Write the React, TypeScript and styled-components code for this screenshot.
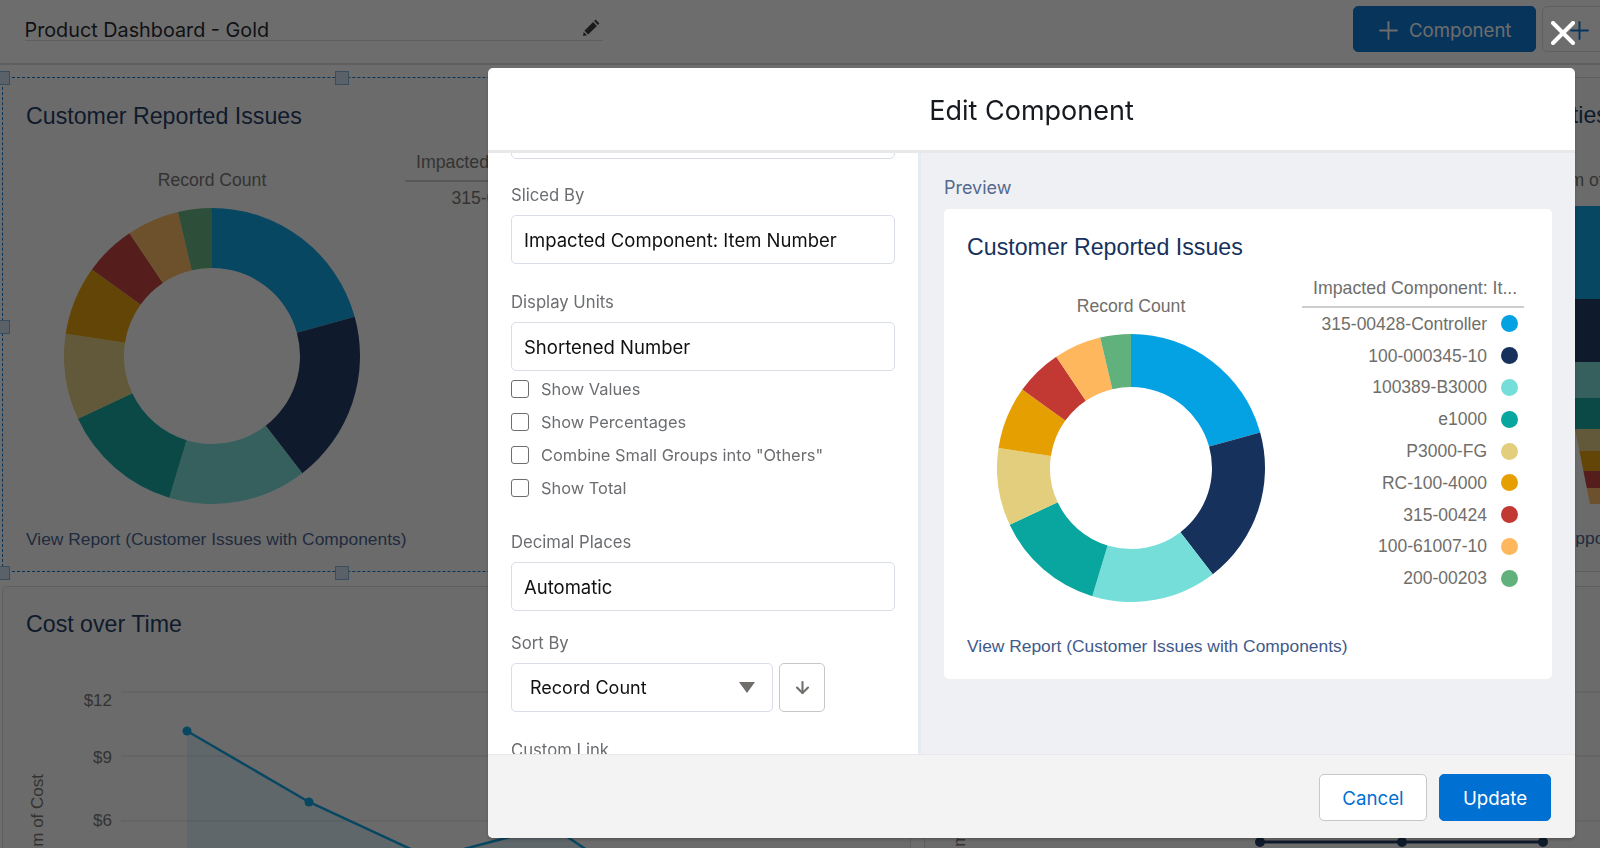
import React from "react";
import styled, { createGlobalStyle } from "styled-components";
import { ArrowDown, Plus } from "lucide-react";

const GlobalStyle = createGlobalStyle`
	* {
		box-sizing: border-box;
	}
	html, body {
		margin: 0;
		height: 100%;
		overflow: hidden;
		background: #fff;
	}
`;

// Dashboard behind the modal
const Page = styled.div`
	height: 848px;
	overflow: hidden;
	background: #fff;
	font-family: "Liberation Sans", Arial, sans-serif;
`;

const TopBar = styled.header`
	height: 65px;
	display: flex;
	padding: 6px 0 0 24.5px;
	border-bottom: 2px solid #dcdcdc;
	background: #fff;
`;

const NameField = styled.div`
	width: 578px;
	height: 36px;
	margin-top: -1px;
	padding: 14px 3px 0 0;
	display: flex;
	justify-content: space-between;
	align-items: center;
	border-bottom: 1px solid #dcdcdc;
	font: 400 19.8px/24px Inter, sans-serif;
	color: #16191f;
`;

const Pencil = styled.svg`
	margin-top: -4px;
`;

const TopActions = styled.div`
	margin-left: auto;
	display: flex;
	gap: 6px;
	margin-right: -42px;
`;

const TopButton = styled.button<{ $primary?: boolean }>`
	height: 46px;
	width: ${({ $primary }) => ($primary ? "183px" : "100px")};
	padding: 2px 0 0 ${({ $primary }) => ($primary ? "20px" : "22px")};
	display: flex;
	align-items: center;
	gap: 6px;
	border-radius: 5px;
	border: 1px solid ${({ $primary }) => ($primary ? "#0070d2" : "#d8dde6")};
	background: ${({ $primary }) => ($primary ? "#0070d2" : "#fff")};
	color: ${({ $primary }) => ($primary ? "#fff" : "#0070d2")};
	font: 400 18.6px/24px Inter, sans-serif;
`;

const Board = styled.main`
	display: grid;
	grid-template-columns: 909px 700px;
	grid-template-rows: 495px 300px;
	column-gap: 13px;
	row-gap: 14px;
	padding: 12px 0 0 2px;
	background: #fff;
`;

const Card = styled.section<{ $plain?: boolean }>`
	position: relative;
	display: flex;
	flex-direction: column;
	padding: ${({ $plain }) => ($plain ? "25px 24px 22px" : "23px 23px 22px")};
	background: #fbfbfb;
	border-radius: 5px;
	border: ${({ $plain }) => ($plain ? "0" : "1px solid #dcdcdc")};
`;

const CardTitle = styled.h2`
	margin: 0;
	font: 400 23.2px/28px "Liberation Sans", Arial, sans-serif;
	color: #16325c;
	white-space: nowrap;
`;

const ReportLink = styled.a`
	margin-top: auto;
	font: 400 17.4px/22px "Liberation Sans", Arial, sans-serif;
	color: #3f5a8a;
	white-space: nowrap;
`;

const Indent = styled.div<{ $left: number; $top?: string }>`
	margin-left: ${({ $left }) => $left}px;
	margin-top: ${({ $top }) => $top ?? "0"};
	white-space: nowrap;
`;

const AxisCaption = styled.div`
	font: 400 17.6px/20px "Liberation Sans", Arial, sans-serif;
	color: #706e6b;
`;

const Funnel = styled.svg`
	display: block;
`;

// selection frame around the first card
const SelectionFrame = styled.div`
	position: absolute;
	inset: 0;
	border: 1px dashed #0070d2;
	pointer-events: none;
`;

const Handle = styled.span<{ $x: number; $y: number }>`
	position: absolute;
	left: ${({ $x }) => $x}px;
	top: ${({ $y }) => $y}px;
	width: 14px;
	height: 14px;
	background: #cfe2f3;
	border: 1px solid #7fb2de;
`;

// donut + legend
const ChartRow = styled.div<{ $top: number; $donutCol: number; $gap: number }>`
	display: grid;
	grid-template-columns: ${({ $donutCol }) => $donutCol}px 1fr;
	column-gap: ${({ $gap }) => $gap}px;
	margin-top: ${({ $top }) => $top}px;
`;

const DonutCol = styled.div`
	display: flex;
	flex-direction: column;
	align-items: center;
	padding-top: 18px;
`;

const DonutSvg = styled.svg`
	display: block;
	margin-top: 18px;
`;

const LegendBox = styled.div<{ $width: number }>`
	width: ${({ $width }) => $width}px;
`;

const LegendTitle = styled.div`
	height: 30px;
	padding: 0 0 0 11px;
	border-bottom: 2.5px solid #cfcdcb;
	font: 400 17.75px/20px "Liberation Sans", Arial, sans-serif;
	color: #706e6b;
	white-space: nowrap;
	overflow: hidden;
`;

const LegendRow = styled.div`
	height: 31.8px;
	display: flex;
	align-items: center;
	justify-content: flex-end;
	gap: 14px;
	padding-right: 6px;
	font: 400 17.5px/20px "Liberation Sans", Arial, sans-serif;
	color: #706e6b;
`;

const Dot = styled.span<{ $color: string }>`
	width: 17px;
	height: 17px;
	border-radius: 50%;
	background: ${({ $color }) => $color};
`;

const TimeSvg = styled.svg`
	display: block;
	margin: 22px 0 0 -23px;
	flex-shrink: 0;
`;

// Modal
const Overlay = styled.div`
	position: fixed;
	inset: 0;
	display: flex;
	padding: 68px 25px 10px 488px;
	background: rgba(12, 12, 12, 0.6);
`;

const CloseIcon = styled.svg`
	position: absolute;
	left: 1551px;
	top: 21px;
`;

const Modal = styled.div`
	flex: 1;
	display: flex;
	flex-direction: column;
	overflow: hidden;
	border-radius: 5px;
	background: #fff;
	box-shadow: 0 2px 3px rgba(0, 0, 0, 0.2);
	font-family: Inter, sans-serif;
`;

const ModalHeader = styled.div`
	height: 85px;
	flex-shrink: 0;
	display: flex;
	align-items: center;
	justify-content: center;
	padding-top: 3px;
	border-bottom: 3px solid #e8e8e8;
	font: 400 27px/34px Inter, sans-serif;
	color: #16191f;
`;

const ModalBody = styled.div`
	flex: 1;
	min-height: 0;
	display: flex;
`;

const FormPane = styled.div`
	width: 433px;
	flex-shrink: 0;
	overflow: hidden;
	padding: 0 23px;
	border-right: 3px solid #e6eaf2;
`;

const FormScroll = styled.div`
	margin-top: -43px;
`;

const Field = styled.div<{ $top: number }>`
	margin-top: ${({ $top }) => $top}px;
`;

const FieldLabel = styled.div`
	font: 400 16.7px/22px Inter, sans-serif;
	color: #6b6d70;
	margin-bottom: 9.5px;
`;

const TextBox = styled.div`
	width: 384px;
	height: 49px;
	padding: 1px 0 0 12px;
	display: flex;
	align-items: center;
	border: 1px solid #d8dde6;
	border-radius: 5px;
	background: #fff;
	font: 400 18.5px/24px Inter, sans-serif;
	color: #111;
`;

const CheckList = styled.div`
	display: flex;
	flex-direction: column;
	gap: 15px;
	margin-top: 9px;
`;

const CheckRow = styled.label`
	height: 18px;
	display: flex;
	align-items: center;
	gap: 12px;
	font: 400 16.4px/22px Inter, sans-serif;
	color: #6b6d70;
	white-space: nowrap;
`;

const CheckBox = styled.span`
	width: 18px;
	height: 18px;
	border: 1px solid #706e6b;
	border-radius: 3px;
	background: #fff;
`;

const SortRow = styled.div`
	display: flex;
	gap: 6px;
`;

const SelectBox = styled.div`
	width: 262px;
	height: 49px;
	padding: 0 17px 0 18px;
	display: flex;
	align-items: center;
	justify-content: space-between;
	border: 1px solid #d8dde6;
	border-radius: 5px;
	font: 400 18px/24px Inter, sans-serif;
	color: #111;
`;

const Caret = styled.span`
	width: 0;
	height: 0;
	border-left: 8.5px solid transparent;
	border-right: 8.5px solid transparent;
	border-top: 11px solid #706e6b;
`;

const IconButton = styled.div`
	width: 46px;
	height: 49px;
	display: flex;
	align-items: center;
	justify-content: center;
	border: 1px solid #c9c7c5;
	border-radius: 5px;
	color: #706e6b;
`;

const PreviewPane = styled.div`
	flex: 1;
	display: flex;
	flex-direction: column;
	padding: 24px 24px 0 23px;
	background: #eff0f4;
`;

const PreviewLabel = styled.div`
	font: 400 18px/22px Inter, sans-serif;
	color: #54698d;
	margin-bottom: 10px;
`;

const PreviewCard = styled(Card)`
	height: 470px;
	padding: 24px 28px 22px 23px;
	border: 0;
	background: #fff;
`;

const ModalFooter = styled.div`
	height: 84px;
	flex-shrink: 0;
	display: flex;
	justify-content: flex-end;
	gap: 12px;
	padding: 19px 24px 0 0;
	background: #f3f3f3;
	border-top: 1px solid #e8e8e8;
`;

const FooterButton = styled.button<{ $primary?: boolean }>`
	width: ${({ $primary }) => ($primary ? "112px" : "108px")};
	height: 47px;
	padding-top: 4px;
	border-radius: 5px;
	border: ${({ $primary }) => ($primary ? "1px solid #0070d2" : "1.5px solid #c9c7c5")};
	background: ${({ $primary }) => ($primary ? "#0070d2" : "#fff")};
	color: ${({ $primary }) => ($primary ? "#fff" : "#0070d2")};
	font: 400 18.7px/24px Inter, sans-serif;
`;

const slices = [
	{ label: "315-00428-Controller", color: "#04a1e3", end: 74.6 },
	{ label: "100-000345-10", color: "#16325c", end: 142.4 },
	{ label: "100389-B3000", color: "#76ded9", end: 196.8 },
	{ label: "e1000", color: "#08a69e", end: 244.9 },
	{ label: "P3000-FG", color: "#e2ce7d", end: 278.6 },
	{ label: "RC-100-4000", color: "#e69f00", end: 305.8 },
	{ label: "315-00424", color: "#c23934", end: 326.1 },
	{ label: "100-61007-10", color: "#ffb75d", end: 346.7 },
	{ label: "200-00203", color: "#60b17b", end: 360 },
];

const polar = (c: number, r: number, deg: number) => {
	const a = (deg * Math.PI) / 180;
	return `${(c + r * Math.sin(a)).toFixed(2)} ${(c - r * Math.cos(a)).toFixed(2)}`;
};

const Donut: React.FC<{ size: number; hole: number }> = ({ size, hole }) => {
	const c = size / 2;
	let start = 0;
	return (
		<DonutSvg width={size} height={size} viewBox={`0 0 ${size} ${size}`}>
			{slices.map((s) => {
				const large = s.end - start > 180 ? 1 : 0;
				const d = `M${polar(c, c, start)} A${c} ${c} 0 ${large} 1 ${polar(c, c, s.end)} L${polar(c, hole, s.end)} A${hole} ${hole} 0 ${large} 0 ${polar(c, hole, start)} Z`;
				start = s.end;
				return <path key={s.label} d={d} fill={s.color} />;
			})}
		</DonutSvg>
	);
};

const ChartBlock: React.FC<{
	size: number;
	hole: number;
	top: number;
	donutCol: number;
	gap: number;
	legendWidth: number;
}> = ({ size, hole, top, donutCol, gap, legendWidth }) => (
	<ChartRow $top={top} $donutCol={donutCol} $gap={gap}>
		<DonutCol>
			<AxisCaption>Record Count</AxisCaption>
			<Donut size={size} hole={hole} />
		</DonutCol>
		<LegendBox $width={legendWidth}>
			<LegendTitle>Impacted Component: It...</LegendTitle>
			{slices.map((s) => (
				<LegendRow key={s.label}>
					{s.label}
					<Dot $color={s.color} />
				</LegendRow>
			))}
		</LegendBox>
	</ChartRow>
);

const TimeChart: React.FC<{ width: number; gridEnd: number; children: React.ReactNode }> = ({
	width,
	gridEnd,
	children,
}) => (
	<TimeSvg width={width} height={240} viewBox={`0 0 ${width} 240`}>
		<g stroke="#dcdcdc" strokeWidth="1">
			<line x1="118" x2={gridEnd} y1="32" y2="32" />
			<line x1="118" x2={gridEnd} y1="96" y2="96" />
			<line x1="118" x2={gridEnd} y1="161" y2="161" />
		</g>
		<g fill="#706e6b" fontSize="17" fontFamily="Liberation Sans, Arial, sans-serif" textAnchor="end">
			<text x="109" y="46">$12</text>
			<text x="109" y="103">$9</text>
			<text x="109" y="166">$6</text>
			<text transform="translate(40 114) rotate(-90)">Sum of Cost</text>
		</g>
		{children}
	</TimeSvg>
);

const costLine = "184,71 306,142 427,198 548,166 617,212 700,250";

const App: React.FC = () => {
	return (
		<>
			<GlobalStyle />
			<Page>
				<TopBar>
					<NameField>
						Product Dashboard - Gold
						<Pencil width="17" height="17" viewBox="0 0 17 17">
							<path d="M12.6 0.6 L16.4 4.4 L14.9 5.9 L11.1 2.1 Z M10.1 3.1 L13.9 6.9 L5.2 15.6 L1.4 11.8 Z M0.7 13 L4 16.3 L0 17 Z" fill="#333" />
						</Pencil>
					</NameField>
					<TopActions>
						<TopButton $primary>
							<Plus size={29} strokeWidth={1.6} />
							Component
						</TopButton>
						<TopButton>
							<Plus size={29} strokeWidth={1.6} />
						</TopButton>
					</TopActions>
				</TopBar>
				<Board>
					<Card $plain>
						<CardTitle>Customer Reported Issues</CardTitle>
						<ChartBlock size={296} hole={88} top={22} donutCol={372} gap={7} legendWidth={249} />
						<ReportLink>View Report (Customer Issues with Components)</ReportLink>
						<SelectionFrame />
						<Handle $x={-6} $y={-6} />
						<Handle $x={333} $y={-6} />
						<Handle $x={-6} $y={243} />
						<Handle $x={-6} $y={489} />
						<Handle $x={333} $y={489} />
					</Card>
					<Card>
						<Indent $left={522}>
							<CardTitle>Opportunities</CardTitle>
						</Indent>
						<Indent $left={600} $top="41px">
							<AxisCaption>Sum of Cost</AxisCaption>
						</Indent>
						<Indent $left={552} $top="16px">
							<Funnel width="100" height="298" viewBox="0 207 100 298">
								{/* x here is page x minus 1500 */}
								<rect x="0" y="207" width="100" height="93" fill="#04a1e3" />
								<rect x="0" y="300" width="100" height="63" fill="#16325c" />
								<rect x="0" y="363" width="100" height="36" fill="#76ded9" />
								<rect x="0" y="399" width="100" height="31" fill="#08a69e" />
								<polygon points="75,430 100,430 100,452 79.4,452" fill="#e2ce7d" />
								<polygon points="79.4,452 100,452 100,472 83.4,472" fill="#e69f00" />
								<polygon points="83.4,472 100,472 100,489 86.8,489" fill="#c23934" />
								<polygon points="86.8,489 100,489 100,505 90,505" fill="#ffb75d" />
							</Funnel>
						</Indent>
						<Indent $left={501} $top="auto">
							<ReportLink>View Report (Support Cases)</ReportLink>
						</Indent>
					</Card>
					<Card>
						<CardTitle>Cost over Time</CardTitle>
						<TimeChart width={907} gridEnd={907}>
							<polygon points={`${costLine} 700,240 184,240`} fill="#04a1e3" fillOpacity="0.12" />
							<polyline points={costLine} fill="none" stroke="#04a1e3" strokeWidth="2.5" />
							<circle cx="184" cy="71" r="4.5" fill="#04a1e3" />
							<circle cx="306" cy="142" r="4.5" fill="#04a1e3" />
						</TimeChart>
					</Card>
					<Card>
						<CardTitle>Units over Time</CardTitle>
						<TimeChart width={698} gridEnd={698}>
							<polyline points="335,182 477,182 618,182" fill="none" stroke="#16325c" strokeWidth="3" />
							<circle cx="335" cy="182" r="5" fill="#16325c" />
							<circle cx="477" cy="182" r="5" fill="#16325c" />
							<circle cx="618" cy="182" r="5" fill="#16325c" />
						</TimeChart>
					</Card>
				</Board>
			</Page>
			<Overlay>
				<CloseIcon width="24" height="24" viewBox="0 0 24 24">
					<path d="M2 2 L22 22 M22 2 L2 22" stroke="#fff" strokeWidth="4" strokeLinecap="round" />
				</CloseIcon>
				<Modal>
					<ModalHeader>Edit Component</ModalHeader>
					<ModalBody>
						<FormPane>
							<FormScroll>
								<TextBox />
								<Field $top={24.5}>
									<FieldLabel>Sliced By</FieldLabel>
									<TextBox>Impacted Component: Item Number</TextBox>
								</Field>
								<Field $top={26.5}>
									<FieldLabel>Display Units</FieldLabel>
									<TextBox>Shortened Number</TextBox>
								</Field>
								<CheckList>
									<CheckRow><CheckBox />Show Values</CheckRow>
									<CheckRow><CheckBox />Show Percentages</CheckRow>
									<CheckRow><CheckBox />Combine Small Groups into "Others"</CheckRow>
									<CheckRow><CheckBox />Show Total</CheckRow>
								</CheckList>
								<Field $top={33.5}>
									<FieldLabel>Decimal Places</FieldLabel>
									<TextBox>Automatic</TextBox>
								</Field>
								<Field $top={20.5}>
									<FieldLabel>Sort By</FieldLabel>
									<SortRow>
										<SelectBox>
											Record Count
											<Caret />
										</SelectBox>
										<IconButton>
											<ArrowDown size={19} strokeWidth={2.6} />
										</IconButton>
									</SortRow>
								</Field>
								<Field $top={27}>
									<FieldLabel>Custom Link</FieldLabel>
								</Field>
							</FormScroll>
						</FormPane>
						<PreviewPane>
							<PreviewLabel>Preview</PreviewLabel>
							<PreviewCard $plain>
								<CardTitle>Customer Reported Issues</CardTitle>
								<ChartBlock size={268} hole={81} top={17} donutCol={328} gap={7} legendWidth={222} />
								<ReportLink>View Report (Customer Issues with Components)</ReportLink>
							</PreviewCard>
						</PreviewPane>
					</ModalBody>
					<ModalFooter>
						<FooterButton>Cancel</FooterButton>
						<FooterButton $primary>Update</FooterButton>
					</ModalFooter>
				</Modal>
			</Overlay>
		</>
	);
};

export default App;
